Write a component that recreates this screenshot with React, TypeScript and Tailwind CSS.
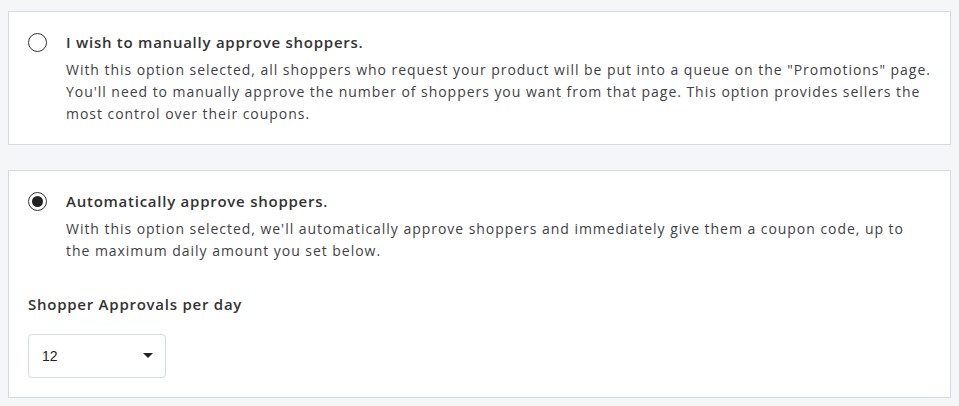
import React from "react";

function Radio({ checked }: { checked?: boolean }) {
  return (
    <div className="w-[19px] h-[19px] rounded-full border-[1.5px] border-[#333] flex items-center justify-center shrink-0">
      {checked && <div className="w-[11px] h-[11px] rounded-full bg-[#222]" />}
    </div>
  );
}

export default function App() {
  return (
    <div
      className="w-[959px] h-[406px] bg-[#f5f6f8] px-2 pt-[11px] text-[#333]"
      style={{ fontFamily: '"Open Sans", "Liberation Sans", sans-serif' }}
    >
      <div className="w-[943px] h-[134px] border border-[#d5dbe1] bg-white pl-[19px] pt-[19px] flex">
        <div className="pt-[2px]">
          <Radio />
        </div>
        <div className="ml-[19px] whitespace-nowrap">
          <div className="text-[15px] leading-[22px] font-semibold tracking-[0.75px] text-[#333]">
            I wish to manually approve shoppers.
          </div>
          <p className="mt-[6px] text-[14px] leading-[22px] tracking-[0.96px] text-[#3f3f46]">
            With this option selected, all shoppers who request your product will be put into a queue on the "Promotions" page.
            <br />
            You'll need to manually approve the number of shoppers you want from that page. This option provides sellers the
            <br />
            most control over their coupons.
          </p>
        </div>
      </div>

      <div className="mt-[25px] w-[943px] h-[228px] border border-[#d5dbe1] bg-white pl-[19px] pt-[19px]">
        <div className="flex">
          <div className="pt-[2px]">
            <Radio checked />
          </div>
          <div className="ml-[19px] whitespace-nowrap">
            <div className="text-[15px] leading-[22px] font-semibold tracking-[0.75px] text-[#333]">
              Automatically approve shoppers.
            </div>
            <p className="mt-[6px] text-[14px] leading-[22px] tracking-[0.96px] text-[#3f3f46]">
              With this option selected, we'll automatically approve shoppers and immediately give them a coupon code, up to
              <br />
              the maximum daily amount you set below.
            </p>
          </div>
        </div>
        <div className="mt-[31px] text-[15px] leading-[22px] font-semibold tracking-[0.75px] text-[#333]">
          Shopper Approvals per day
        </div>
        <div
          className="mt-[19px] w-[138px] h-[44px] border border-[#d5dbe1] rounded-[4px] flex items-center justify-between pl-[13px] pr-[12px]"
          style={{ fontFamily: '"Liberation Sans", Arial, sans-serif' }}
        >
          <span className="text-[14px] text-[#222]">12</span>
          <svg width="10" height="6" viewBox="0 0 10 6">
            <path d="M0 0 L10 0 L5 5 Z" fill="#222" />
          </svg>
        </div>
      </div>
    </div>
  );
}
